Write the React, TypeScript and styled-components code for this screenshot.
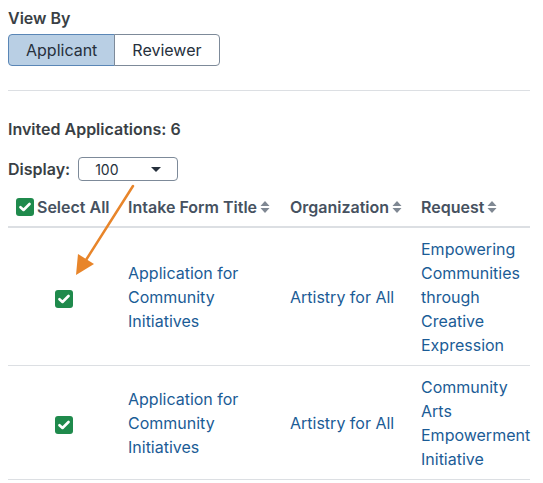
import React, { FunctionComponent } from 'react';
import styled, { createGlobalStyle } from 'styled-components';

const GlobalStyle = createGlobalStyle`
  body {
    margin: 0;
    font-family: Inter, 'Noto Sans', sans-serif;
    color: #343a40;
    background: #fff;
  }
`;

const Page = styled.div`
  position: relative;
  padding: 8px 13px 0 8px;
`;

const Label = styled.div`
  font-size: 16px;
  font-weight: 600;
  color: #3a3f45;
  line-height: 20px;
`;

const ButtonGroup = styled.div`
  display: inline-flex;
  margin-top: 6px;
`;

const ToggleButton = styled.button<{ active?: boolean }>`
  font-family: inherit;
  font-size: 16px;
  color: #26303c;
  height: 32px;
  padding: 0 17px;
  background: ${p => (p.active ? '#b9cfe4' : '#fff')};
  border: 1px solid ${p => (p.active ? '#5a86b6' : '#7d8a99')};
  border-radius: ${p => (p.active ? '4px 0 0 4px' : '0 4px 4px 0')};
  margin-left: ${p => (p.active ? '0' : '-1px')};
`;

const Divider = styled.hr`
  border: none;
  border-top: 1px solid #dcdfe3;
  margin: 24px 0 0 0;
`;

const CountLabel = styled(Label)`
  margin-top: 28px;
`;

const DisplayRow = styled.div`
  display: flex;
  align-items: center;
  gap: 8px;
  margin-top: 18px;
`;

const Select = styled.div`
  width: 100px;
  height: 24px;
  box-sizing: border-box;
  border: 1px solid #7d8a99;
  border-radius: 4px;
  display: flex;
  align-items: center;
  justify-content: space-between;
  padding: 0 16px 0 16px;
  font-size: 14px;
  color: #26303c;
`;

const Caret = styled.span`
  width: 0;
  height: 0;
  border-left: 5px solid transparent;
  border-right: 5px solid transparent;
  border-top: 5px solid #26303c;
`;

const Table = styled.table`
  border-collapse: collapse;
  table-layout: fixed;
  margin-top: 7px;
  width: 522px;
  font-size: 16px;
`;

const Th = styled.th<{ w?: number }>`
  text-align: left;
  font-weight: 600;
  color: #465160;
  padding: 8px 8px 9px;
  white-space: nowrap;
  border-bottom: 2px solid #dcdfe3;
  width: ${p => (p.w ? `${p.w}px` : 'auto')};
  line-height: 20px;
  box-sizing: border-box;
`;

const HeaderInner = styled.span`
  display: inline-flex;
  align-items: center;
  gap: 3px;
`;

const Td = styled.td<{ center?: boolean }>`
  padding: 9px 8px 8px;
  border-bottom: 1px solid #dcdfe3;
  vertical-align: middle;
  text-align: ${p => (p.center ? 'center' : 'left')};
  line-height: 24px;
`;

const Link = styled.a`
  color: #1b5c96;
  text-decoration: none;
`;

const Box = styled.span`
  display: inline-flex;
  width: 18px;
  height: 18px;
  border-radius: 3px;
  background: #1f8a4c;
  align-items: center;
  justify-content: center;
  vertical-align: middle;
`;

const Arrow = styled.svg`
  position: absolute;
  left: 70px;
  top: 182px;
  pointer-events: none;
`;

const CheckBox: FunctionComponent = () => (
  <Box>
    <svg width="12" height="10" viewBox="0 0 12 10">
      <path d="M1.5 5.2 L4.5 8 L10.5 2" stroke="#fff" strokeWidth="2.6" fill="none" strokeLinecap="round" strokeLinejoin="round" />
    </svg>
  </Box>
);

const SortIcon: FunctionComponent = () => (
  <svg width="10" height="14" viewBox="0 0 10 14">
    <path d="M0.5 6 L5 1 L9.5 6 Z" fill="#7f8893" />
    <path d="M0.5 8 L5 13 L9.5 8 Z" fill="#7f8893" />
  </svg>
);

const rows = [
  { title: 'Application for Community Initiatives', org: 'Artistry for All', request: 'Empowering Communities through Creative Expression' },
  { title: 'Application for Community Initiatives', org: 'Artistry for All', request: 'Community Arts Empowerment Initiative' },
];

const App: FunctionComponent = () => (
  <Page>
    <GlobalStyle />
    <Label>View By</Label>
    <ButtonGroup>
      <ToggleButton active>Applicant</ToggleButton>
      <ToggleButton>Reviewer</ToggleButton>
    </ButtonGroup>
    <Divider />
    <CountLabel>Invited Applications: 6</CountLabel>
    <DisplayRow>
      <Label>Display:</Label>
      <Select>
        <span>100</span>
        <Caret />
      </Select>
    </DisplayRow>
    <Table>
      <thead>
        <tr>
          <Th w={112}>
            <HeaderInner><CheckBox />Select All</HeaderInner>
          </Th>
          <Th w={162}>
            <HeaderInner>Intake Form Title<SortIcon /></HeaderInner>
          </Th>
          <Th w={131}>
            <HeaderInner>Organization<SortIcon /></HeaderInner>
          </Th>
          <Th>
            <HeaderInner>Request<SortIcon /></HeaderInner>
          </Th>
        </tr>
      </thead>
      <tbody>
        {rows.map((r, i) => (
          <tr key={i}>
            <Td center><CheckBox /></Td>
            <Td><Link href="#">{r.title}</Link></Td>
            <Td><Link href="#">{r.org}</Link></Td>
            <Td><Link href="#">{r.request}</Link></Td>
          </tr>
        ))}
      </tbody>
    </Table>
    <Arrow width="70" height="100" viewBox="0 0 70 100">
      <path d="M63 4 L16 78" stroke="#e8852a" strokeWidth="2.5" strokeLinecap="round" />
      <path d="M6 93 L8 72 L24 82 Z" fill="#e8852a" />
    </Arrow>
  </Page>
);

export default App;
